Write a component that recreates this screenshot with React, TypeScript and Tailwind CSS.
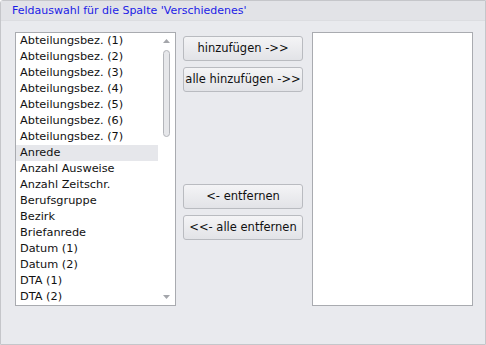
const fields = [
  "Abteilungsbez. (1)",
  "Abteilungsbez. (2)",
  "Abteilungsbez. (3)",
  "Abteilungsbez. (4)",
  "Abteilungsbez. (5)",
  "Abteilungsbez. (6)",
  "Abteilungsbez. (7)",
  "Anrede",
  "Anzahl Ausweise",
  "Anzahl Zeitschr.",
  "Berufsgruppe",
  "Bezirk",
  "Briefanrede",
  "Datum (1)",
  "Datum (2)",
  "DTA (1)",
  "DTA (2)",
];

const Btn = ({ label, className = "" }: { label: string; className?: string }) => (
  <button
    className={`h-[25px] w-[120px] px-0 whitespace-nowrap rounded-[3px] border border-[#b9bbc0] bg-gradient-to-b from-[#f4f4f6] to-[#e2e3e7] text-[11.5px] text-[#111] leading-none ${className}`}
  >
    {label}
  </button>
);

export default function App() {
  return (
    <div
      className="w-[486px] h-[345px] bg-[#e9eaee] border border-[#c5c6ca] rounded-tl-[3px] flex flex-col"
      style={{ fontFamily: '"DejaVu Sans", sans-serif' }}
    >
      <div className="h-[20px] bg-[#e2e3e7] border-b border-[#dcdde1] pl-[11px] pt-[3px] text-[11px] text-[#1c1ce6] leading-[14px]">
        Feldauswahl für die Spalte 'Verschiedenes'
      </div>
      <div className="flex pl-[14px] pt-[11px]">
        <div className="w-[161px] h-[274px] bg-white border border-[#a9abb0] flex">
          <div className="flex-1 flex flex-col">
            {fields.map((f, i) => (
              <div
                key={f}
                className={`h-[16px] pl-[4px] text-[11.3px] leading-[16px] text-[#111] whitespace-nowrap ${
                  i === 7 ? "bg-[#e6e7eb]" : ""
                }`}
              >
                {f}
              </div>
            ))}
          </div>
          <div className="w-[17px] flex flex-col items-center pt-[6px] pb-[6px]">
            <svg width="7" height="4" viewBox="0 0 7 4">
              <path d="M3.5 0 L7 4 L0 4 Z" fill="#a4a6ab" />
            </svg>
            <div className="mt-[7px] w-[7px] h-[87px] rounded-[4px] border border-[#b3b5ba] bg-[#e6e7ea]" />
            <div className="flex-1" />
            <svg width="7" height="4" viewBox="0 0 7 4">
              <path d="M0 0 L7 0 L3.5 4 Z" fill="#a4a6ab" />
            </svg>
          </div>
        </div>
        <div className="w-[136px] flex flex-col items-start pl-[7px] pt-[4px]">
          <Btn label="hinzufügen ->>" />
          <Btn label="alle hinzufügen ->>" className="mt-[6px]" />
          <Btn label="<- entfernen" className="mt-[92px]" />
          <Btn label="<<- alle entfernen" className="mt-[6px]" />
        </div>
        <div className="w-[161px] h-[274px] bg-white border border-[#a9abb0]" />
      </div>
    </div>
  );
}
